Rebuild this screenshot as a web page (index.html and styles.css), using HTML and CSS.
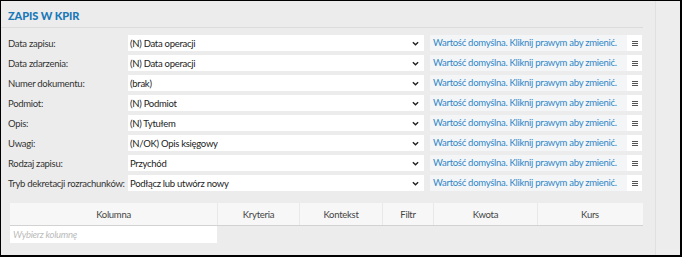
FILE: index.html
```html
<!DOCTYPE html>
<html lang="pl">
<head>
    <meta charset="UTF-8">
    <title>Zapis w KPiR</title>
    <link rel="stylesheet" href="styles.css">
</head>
<body>
    <div class="frame">
        <div class="main">
            <h2 class="section-title">ZAPIS W KPIR</h2>

            <!-- pola zapisu -->
            <div class="fields">
                <div class="field-row">
                    <label class="field-label">Data zapisu:</label>
                    <div class="select-box"><span>(N) Data operacji</span><svg class="chevron" viewBox="0 0 8 5"><path d="M1 1l3 3 3-3"/></svg></div>
                    <div class="hint">Wartość domyślna. Kliknij prawym aby zmienić.</div>
                    <div class="menu-btn"><svg viewBox="0 0 6 5"><path d="M0 .5h6M0 2.5h6M0 4.5h6"/></svg></div>
                </div>
                <div class="field-row">
                    <label class="field-label">Data zdarzenia:</label>
                    <div class="select-box"><span>(N) Data operacji</span><svg class="chevron" viewBox="0 0 8 5"><path d="M1 1l3 3 3-3"/></svg></div>
                    <div class="hint">Wartość domyślna. Kliknij prawym aby zmienić.</div>
                    <div class="menu-btn"><svg viewBox="0 0 6 5"><path d="M0 .5h6M0 2.5h6M0 4.5h6"/></svg></div>
                </div>
                <div class="field-row">
                    <label class="field-label">Numer dokumentu:</label>
                    <div class="select-box"><span>(brak)</span><svg class="chevron" viewBox="0 0 8 5"><path d="M1 1l3 3 3-3"/></svg></div>
                    <div class="hint">Wartość domyślna. Kliknij prawym aby zmienić.</div>
                    <div class="menu-btn"><svg viewBox="0 0 6 5"><path d="M0 .5h6M0 2.5h6M0 4.5h6"/></svg></div>
                </div>
                <div class="field-row">
                    <label class="field-label">Podmiot:</label>
                    <div class="select-box"><span>(N) Podmiot</span><svg class="chevron" viewBox="0 0 8 5"><path d="M1 1l3 3 3-3"/></svg></div>
                    <div class="hint">Wartość domyślna. Kliknij prawym aby zmienić.</div>
                    <div class="menu-btn"><svg viewBox="0 0 6 5"><path d="M0 .5h6M0 2.5h6M0 4.5h6"/></svg></div>
                </div>
                <div class="field-row">
                    <label class="field-label">Opis:</label>
                    <div class="select-box"><span>(N) Tytułem</span><svg class="chevron" viewBox="0 0 8 5"><path d="M1 1l3 3 3-3"/></svg></div>
                    <div class="hint">Wartość domyślna. Kliknij prawym aby zmienić.</div>
                    <div class="menu-btn"><svg viewBox="0 0 6 5"><path d="M0 .5h6M0 2.5h6M0 4.5h6"/></svg></div>
                </div>
                <div class="field-row">
                    <label class="field-label">Uwagi:</label>
                    <div class="select-box"><span>(N/OK) Opis księgowy</span><svg class="chevron" viewBox="0 0 8 5"><path d="M1 1l3 3 3-3"/></svg></div>
                    <div class="hint">Wartość domyślna. Kliknij prawym aby zmienić.</div>
                    <div class="menu-btn"><svg viewBox="0 0 6 5"><path d="M0 .5h6M0 2.5h6M0 4.5h6"/></svg></div>
                </div>
                <div class="field-row">
                    <label class="field-label">Rodzaj zapisu:</label>
                    <div class="select-box"><span>Przychód</span><svg class="chevron" viewBox="0 0 8 5"><path d="M1 1l3 3 3-3"/></svg></div>
                    <div class="hint">Wartość domyślna. Kliknij prawym aby zmienić.</div>
                    <div class="menu-btn"><svg viewBox="0 0 6 5"><path d="M0 .5h6M0 2.5h6M0 4.5h6"/></svg></div>
                </div>
                <div class="field-row">
                    <label class="field-label">Tryb dekretacji rozrachunków:</label>
                    <div class="select-box"><span>Podłącz lub utwórz nowy</span><svg class="chevron" viewBox="0 0 8 5"><path d="M1 1l3 3 3-3"/></svg></div>
                    <div class="hint">Wartość domyślna. Kliknij prawym aby zmienić.</div>
                    <div class="menu-btn"><svg viewBox="0 0 6 5"><path d="M0 .5h6M0 2.5h6M0 4.5h6"/></svg></div>
                </div>
            </div>

            <!-- tabela kolumn -->
            <div class="columns-table">
                <div class="table-head">
                    <div class="th col-kolumna">Kolumna</div>
                    <div class="th col-kryteria">Kryteria</div>
                    <div class="th col-kontekst">Kontekst</div>
                    <div class="th col-filtr">Filtr</div>
                    <div class="th col-kwota">Kwota</div>
                    <div class="th col-kurs">Kurs</div>
                </div>
                <div class="column-picker">Wybierz kolumnę</div>
            </div>
        </div>
        <div class="side-panel"></div>
    </div>
</body>
</html>
```

FILE: styles.css
```css
* {
    margin: 0;
    padding: 0;
    box-sizing: border-box;
}

body {
    font-family: Lato, "Liberation Sans", sans-serif;
    font-size: 9.5px;
    letter-spacing: -0.28px;
    color: #333;
    background: #000;
    width: 682px;
    height: 257px;
    overflow: hidden;
}

/* ramka okna */
.frame {
    display: flex;
    width: 682px;
    height: 257px;
    border-top: 1px solid #000;
    border-left: 1px solid #000;
    border-right: 2px solid #000;
    border-bottom: 2px solid #000;
    background: #ececec;
}

.main {
    width: 654px;
    flex-shrink: 0;
}

.side-panel {
    flex: 1;
    border-left: 1px solid #e0e0e0;
    background: #ededed;
}

/* nagłówek sekcji */
.section-title {
    height: 27px;
    margin-right: 12px;
    padding: 8px 0 0 7px;
    border-bottom: 1px solid #dcdcdc;
    color: #1b79b8;
    font-size: 11px;
    font-weight: 900;
    letter-spacing: -0.1px;
}

/* wiersze formularza */
.fields {
    padding: 5px 12px 0 7px;
}

.field-row {
    display: flex;
    align-items: center;
    height: 20px;
}

.field-label {
    width: 120px;
    flex-shrink: 0;
    white-space: nowrap;
    color: #333;
}

.select-box {
    display: flex;
    align-items: center;
    justify-content: space-between;
    width: 296px;
    height: 16px;
    padding: 0 5px 0 2px;
    background: #fff;
    color: #222;
}

.chevron {
    width: 7px;
    height: 5px;
    fill: none;
    stroke: #222;
    stroke-width: 1.6;
}

.hint {
    width: 197px;
    height: 16px;
    margin-left: 6px;
    padding: 2px 0 0 3px;
    background: #f4f5f6;
    color: #2f87c8;
    white-space: nowrap;
    overflow: hidden;
}

.menu-btn {
    display: flex;
    align-items: center;
    justify-content: center;
    width: 15px;
    height: 16px;
    background: #fff;
}

.menu-btn svg {
    width: 6px;
    height: 5px;
    stroke: #555;
    stroke-width: 1;
}

/* tabela */
.columns-table {
    margin: 10px 12px 0 9px;
}

.table-head {
    display: flex;
    height: 23px;
    background: #f7f7f7;
    border-bottom: 1px solid #d2d2d2;
}

.th {
    display: flex;
    align-items: center;
    justify-content: center;
    border-right: 1px solid #e9e9e9;
    color: #444;
}

.th:last-child {
    border-right: none;
}

.col-kolumna { width: 208px; }
.col-kryteria { width: 82px; }
.col-kontekst { width: 83px; }
.col-filtr { width: 51px; }
.col-kwota { width: 104px; }
.col-kurs { width: 104px; }

.column-picker {
    width: 207px;
    height: 17px;
    padding: 3px 0 0 3px;
    background: #fff;
    color: #bbb;
    font-style: italic;
}
```
